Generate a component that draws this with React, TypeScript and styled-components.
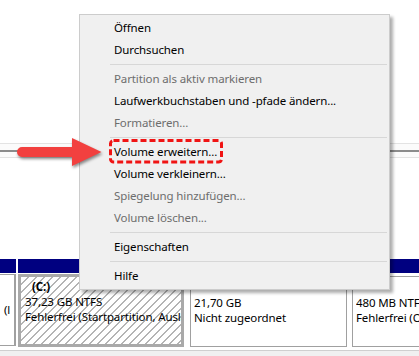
import React from "react";
import styled, { createGlobalStyle } from "styled-components";

const GlobalStyle = createGlobalStyle`
  html, body { margin: 0; padding: 0; background: #ffffff; }
  body {
    font-family: "Noto Sans", "Open Sans", sans-serif;
    font-size: 11.5px;
    letter-spacing: -0.12px;
  }
`;

const Screen = styled.div`
  position: relative;
  width: 419px;
  height: 356px;
  overflow: hidden;
  background: #ffffff;
  display: flex;
  flex-direction: column;
`;

const UpperPane = styled.div`
  flex: none;
  height: 143px;
  background: #ffffff;
`;

const Splitter = styled.div`
  flex: none;
  height: 15px;
  box-sizing: border-box;
  border-top: 1px solid #e3e3e3;
  border-bottom: 1px solid #e3e3e3;
  background: #fbfbfb;
  display: flex;
  flex-direction: column;
  justify-content: center;
`;

const SplitterLine = styled.div`
  height: 2px;
  background: #8c8c8c;
`;

const LowerPane = styled.div`
  flex: 1;
  display: flex;
  flex-direction: column;
  padding-top: 101px;
  background: #ffffff;
`;

const DiskRow = styled.div`
  flex: none;
  display: flex;
  gap: 2px;
  height: 88px;
`;

const Column = styled.div<{ $width: number }>`
  flex: none;
  width: ${(p) => p.$width}px;
  display: flex;
  flex-direction: column;
  overflow: hidden;
`;

const Header = styled.div`
  flex: none;
  height: 14px;
  background: #000080;
`;

const Body = styled.div<{ $pad: string }>`
  flex: 1;
  padding: ${(p) => p.$pad};
  background: #ffffff;
  display: flex;
  min-height: 0;
`;

const Frame = styled.div<{ $selected?: boolean; $edge?: boolean }>`
  flex: 1;
  min-width: 0;
  box-sizing: border-box;
  border: ${(p) => (p.$selected ? "3px solid #a9a9a9" : "1px solid #a0a0a0")};
  border-left-width: ${(p) => (p.$edge ? 0 : p.$selected ? 3 : 1)}px;
  border-right-width: ${(p) => (p.$edge ? 2 : p.$selected ? 3 : 1)}px;
  padding: ${(p) => (p.$selected ? "2px 0 0 4px" : "3px 0 0 3px")};
  background: ${(p) =>
    p.$selected
      ? "repeating-linear-gradient(135deg, #ffffff 0 4.5px, #b4b4b4 4.5px 5.66px)"
      : "#ffffff"};
  overflow: hidden;
  color: #000;
`;

const Line = styled.div<{ $bold?: boolean; $indent?: number; $top?: number }>`
  height: 15px;
  line-height: 15px;
  white-space: nowrap;
  overflow: hidden;
  font-weight: ${(p) => (p.$bold ? 700 : 400)};
  padding-left: ${(p) => p.$indent ?? 0}px;
  margin-top: ${(p) => p.$top ?? 0}px;
`;

const BottomStrip = styled.div`
  flex: 1;
  border-top: 1px solid #cfcfcf;
  margin-top: 3px;
  background: #f0f0f0;
`;

const Menu = styled.div`
  position: absolute;
  left: 79px;
  top: 14px;
  width: 311px;
  box-sizing: border-box;
  padding: 2px 0;
  background: #f0f0f0;
  border: 1px solid #cccccc;
  box-shadow: 3px 3px 3px rgba(0, 0, 0, 0.32);
  display: flex;
  flex-direction: column;
`;

const Item = styled.div<{ $disabled?: boolean }>`
  height: 22px;
  line-height: 21px;
  padding-left: 34px;
  white-space: nowrap;
  color: ${(p) => (p.$disabled ? "#6d6d6d" : "#000000")};
`;

const Separator = styled.div`
  height: 1px;
  margin: 3px 2px 3px 30px;
  background: #d7d7d7;
`;

const ArrowSvg = styled.svg`
  position: absolute;
  left: 0;
  top: 130px;
  overflow: visible;
  filter: drop-shadow(1px 2px 1.5px rgba(0, 0, 0, 0.45));
`;

const HighlightSvg = styled.svg`
  position: absolute;
  left: 107px;
  top: 137px;
  overflow: visible;
`;

type MenuEntry = { label?: string; disabled?: boolean; sep?: boolean };

const entries: MenuEntry[] = [
  { label: "Öffnen" },
  { label: "Durchsuchen" },
  { sep: true },
  { label: "Partition als aktiv markieren", disabled: true },
  { label: "Laufwerkbuchstaben und -pfade ändern..." },
  { label: "Formatieren...", disabled: true },
  { sep: true },
  { label: "Volume erweitern..." },
  { label: "Volume verkleinern..." },
  { label: "Spiegelung hinzufügen...", disabled: true },
  { label: "Volume löschen...", disabled: true },
  { sep: true },
  { label: "Eigenschaften" },
  { sep: true },
  { label: "Hilfe" },
];

export default function App() {
  return (
    <>
      <GlobalStyle />
      <Screen>
        <UpperPane />
        <Splitter>
          <SplitterLine />
        </Splitter>
        <LowerPane>
          <DiskRow>
            <Column $width={16}>
              <Header />
              <Body $pad="1px 0 1px 0">
                <Frame $edge>
                  <Line $indent={1} $top={24}>(l</Line>
                </Frame>
              </Body>
            </Column>
            <Column $width={166}>
              <Header />
              <Body $pad="1px 0 0 0">
                <Frame $selected>
                  <Line $bold $indent={7}>(C:)</Line>
                  <Line>37,23 GB NTFS</Line>
                  <Line>Fehlerfrei (Startpartition, Auslagerungsdatei, Absturzabbild, Primäre Partition)</Line>
                </Frame>
              </Body>
            </Column>
            <Column $width={163}>
              <Header />
              <Body $pad="3px 2px 0 4px">
                <Frame>
                  <Line $top={15}>21,70 GB</Line>
                  <Line>Nicht zugeordnet</Line>
                </Frame>
              </Body>
            </Column>
            <Column $width={80}>
              <Header />
              <Body $pad="3px 0 0 1px">
                <Frame>
                  <Line $top={15} $indent={-1}>480 MB NTFS</Line>
                  <Line $indent={-1}>Fehlerfrei (OEM-Partition)</Line>
                </Frame>
              </Body>
            </Column>
          </DiskRow>
          <BottomStrip />
        </LowerPane>

        <Menu>
          {entries.map((e, i) =>
            e.sep ? (
              <Separator key={i} />
            ) : (
              <Item key={i} $disabled={e.disabled}>
                {e.label}
              </Item>
            )
          )}
        </Menu>

        <ArrowSvg width={110} height={45} viewBox="0 0 110 45">
          <path
            d="M22,17 H72 V8 L101.5,22 L72,36 V27 H22 A5,5 0 0 1 22,17 Z"
            fill="#f2403f"
          />
        </ArrowSvg>

        <HighlightSvg width={118} height={28} viewBox="0 0 118 28">
          <rect
            x={3.5}
            y={3.5}
            width={111}
            height={21.5}
            rx={3}
            ry={3}
            fill="none"
            stroke="#f01414"
            strokeWidth={3}
            strokeDasharray="6 3"
          />
        </HighlightSvg>
      </Screen>
    </>
  );
}
